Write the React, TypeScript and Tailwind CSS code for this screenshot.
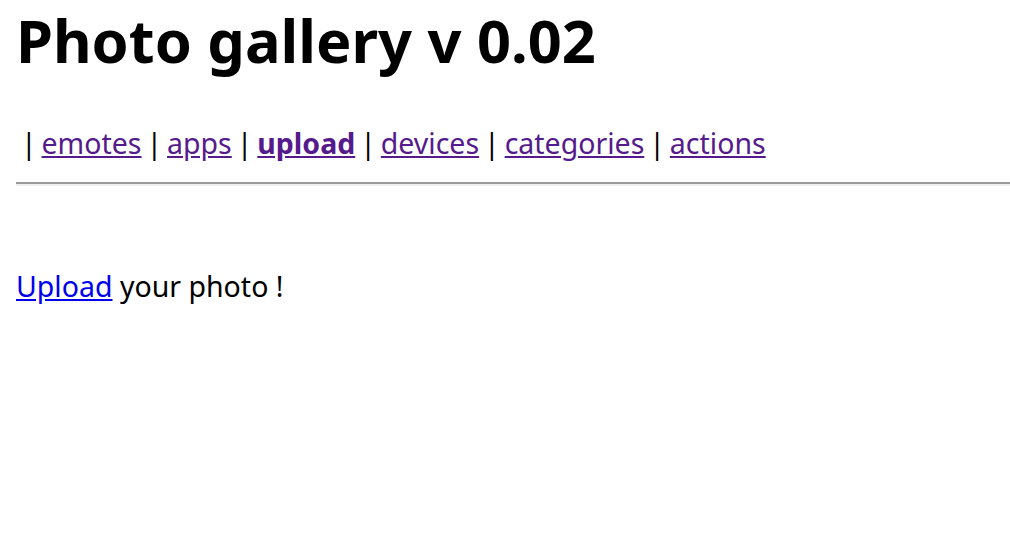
export default function App() {
    const links = ['emotes', 'apps', 'upload', 'devices', 'categories', 'actions']

    return (
        <div className="min-h-screen bg-white pl-4 text-black font-['Noto_Sans',sans-serif]">
            <h1 className="text-[59.5px] font-bold leading-[80px]">Photo gallery v 0.02</h1>

            <div className="mt-[47px] text-[28.5px] leading-[32px] whitespace-pre [word-spacing:-2.5px]">
                {' '}
                {links.map((name) => (
                    <span key={name}>
                        {'| '}
                        <a href="#" className={`underline text-[#551a8b] ${name === 'upload' ? 'font-bold' : ''}`}>
                            {name}
                        </a>
                        {name !== 'actions' ? ' ' : ''}
                    </span>
                ))}
            </div>

            <div className="mt-[23px] border-t-2 border-b-2 border-t-[#999999] border-b-[#eeeeee]" />

            <p className="mt-[84px] text-[28.5px] leading-[32px]">
                <a href="#" className="underline text-[#0000ee]">Upload</a> your photo !
            </p>
        </div>
    )
}
